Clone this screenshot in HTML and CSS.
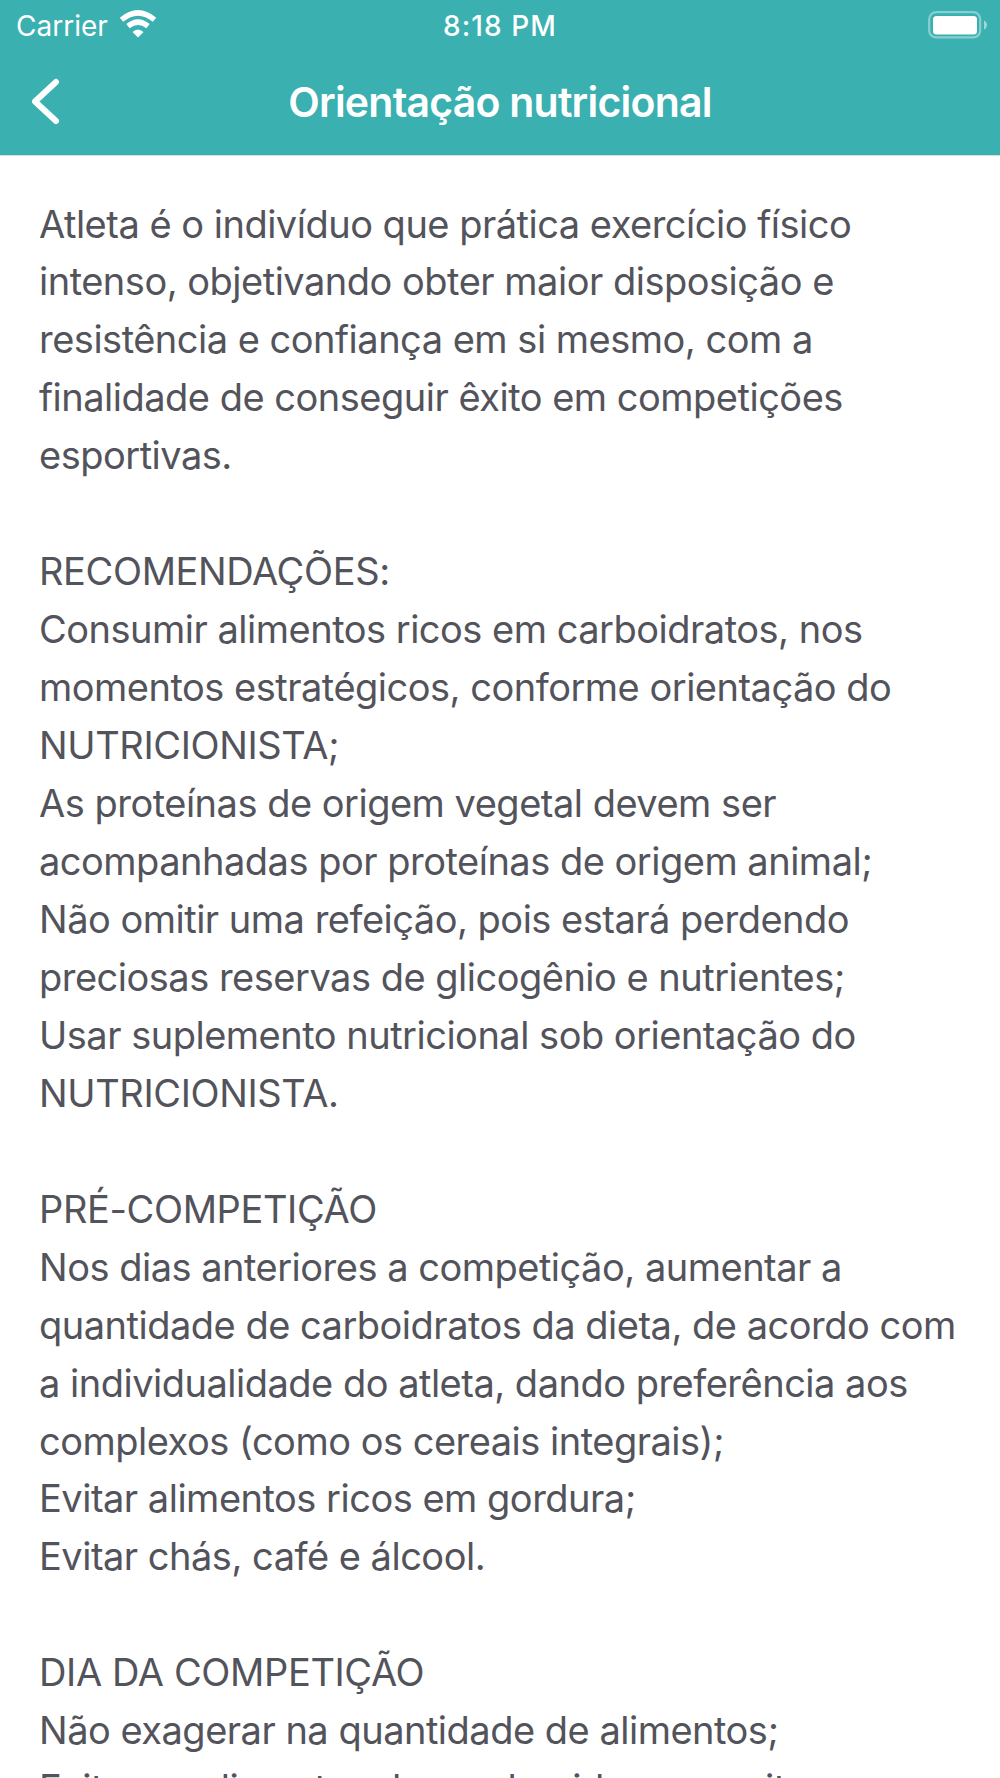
FILE: index.html
```html
<!DOCTYPE html>
<html lang="pt-BR">
<head>
    <meta charset="UTF-8">
    <meta name="viewport" content="width=device-width, initial-scale=1.0">
    <title>Orientação nutricional</title>
    <link rel="stylesheet" href="styles.css">
</head>
<body>
    <header>
        <div class="status-bar">
            <div class="carrier">
                <span>Carrier</span>
                <svg class="wifi" width="38" height="28" viewBox="0 0 38 28">
                    <path d="M2.5 9.8Q19-4 35.5 9.8" fill="none" stroke="#fff" stroke-width="5.4"/>
                    <path d="M9 16.2Q19 8 29 16.2" fill="none" stroke="#fff" stroke-width="5.4"/>
                    <path d="M13.5 22Q19 17 24.5 22L19 27.5Z" fill="#fff"/>
                </svg>
            </div>
            <span class="time">8:18 PM</span>
            <svg class="battery" width="60" height="28" viewBox="0 0 60 28">
                <rect x="1.2" y="1.2" width="51" height="25.2" rx="7" fill="none" stroke="#fff" stroke-opacity=".4" stroke-width="2.2"/>
                <rect x="5" y="5" width="44" height="18.5" rx="3.5" fill="#fff"/>
                <path d="M56 9.5Q59 11 59 14T56 18.7Z" fill="#fff" fill-opacity=".5"/>
            </svg>
        </div>
        <div class="nav-bar">
            <a class="back" href="#" aria-label="Voltar">
                <svg width="30" height="48" viewBox="0 0 30 48">
                    <path d="M26 4L5 23.5L26 43" fill="none" stroke="#fff" stroke-width="6" stroke-linecap="round" stroke-linejoin="round"/>
                </svg>
            </a>
            <h1>Orientação nutricional</h1>
        </div>
    </header>

    <main class="content">
        <p>
            Atleta é o indivíduo que prática exercício físico<br>
            intenso, objetivando obter maior disposição e<br>
            resistência e confiança em si mesmo, com a<br>
            finalidade de conseguir êxito em competições<br>
            esportivas.
        </p>
        <p>
            <span class="caps">RECOMENDAÇÕES:</span><br>
            Consumir alimentos ricos em carboidratos, nos<br>
            momentos estratégicos, conforme orientação do<br>
            <span class="caps">NUTRICIONISTA;</span><br>
            As proteínas de origem vegetal devem ser<br>
            acompanhadas por proteínas de origem animal;<br>
            Não omitir uma refeição, pois estará perdendo<br>
            preciosas reservas de glicogênio e nutrientes;<br>
            Usar suplemento nutricional sob orientação do<br>
            <span class="caps">NUTRICIONISTA.</span>
        </p>
        <p>
            <span class="caps">PRÉ-COMPETIÇÃO</span><br>
            Nos dias anteriores a competição, aumentar a<br>
            quantidade de carboidratos da dieta, de acordo com<br>
            a individualidade do atleta, dando preferência aos<br>
            complexos (como os cereais integrais);<br>
            Evitar alimentos ricos em gordura;<br>
            Evitar chás, café e álcool.
        </p>
        <p>
            <span class="caps">DIA DA COMPETIÇÃO</span><br>
            Não exagerar na quantidade de alimentos;<br>
            Evitar os alimentos desconhecidos ou muito
        </p>
    </main>
</body>
</html>
```
FILE: styles.css
```css
* {
    box-sizing: border-box;
}

body {
    margin: 0;
    height: 1778px;
    overflow: hidden;
    font-family: Inter, "Liberation Sans", sans-serif;
    background-color: #fff;
    color: #53535b;
}

header {
    height: 156px;
    background-color: #3ab0b1;
    border-bottom: 1px solid #d5dfe2;
    color: #fff;
}

.status-bar {
    display: grid;
    grid-template-columns: 1fr auto 1fr;
    align-items: center;
    height: 51px;
    padding: 0 12px;
    font-size: 28px;
}

.carrier {
    display: flex;
    align-items: center;
    gap: 11px;
    padding-left: 4px;
}

.wifi {
    margin-bottom: 3px;
}

.time {
    font-weight: 500;
    letter-spacing: 1.1px;
}

.battery {
    justify-self: end;
    margin-bottom: 2px;
}

.nav-bar {
    display: grid;
    grid-template-columns: 100px 1fr 100px;
    align-items: center;
    height: 102px;
}

.back {
    display: flex;
    padding-left: 30px;
}

h1 {
    margin: 0;
    font-size: 41px;
    font-weight: 600;
    letter-spacing: -0.78px;
    text-align: center;
    white-space: nowrap;
}

.content {
    height: 1622px;
    padding: 39.5px 39px 0;
    overflow: hidden;
    font-size: 38px;
    line-height: 57.96px;
    letter-spacing: -0.5px;
    white-space: nowrap;
}

.content p {
    margin: 0 0 57.96px;
}

.caps {
    letter-spacing: -0.37px;
}
```
